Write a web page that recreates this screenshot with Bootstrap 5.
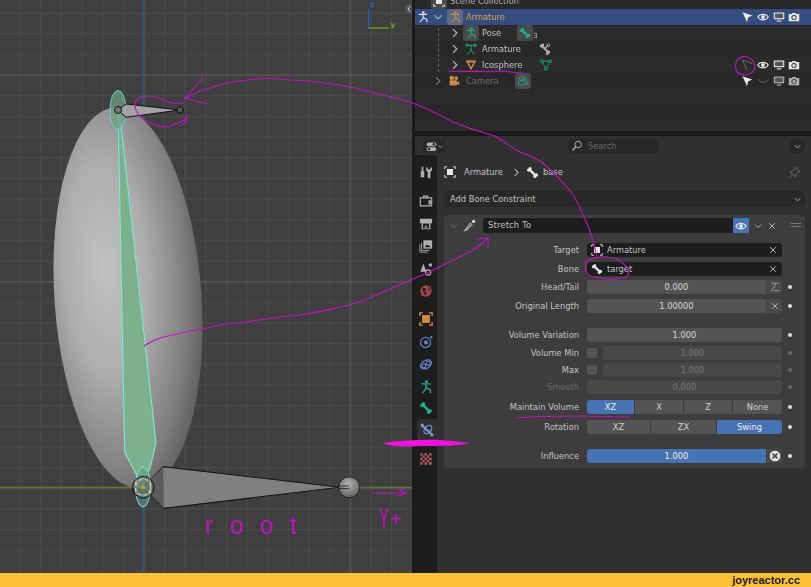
<!DOCTYPE html>
<html lang="en">
<head>
<meta charset="utf-8">
<title>Blender Stretch To constraint</title>
<link href="https://cdn.jsdelivr.net/npm/bootstrap@5.3.0/dist/css/bootstrap.min.css" rel="stylesheet">
<style>
html,body{margin:0;padding:0;width:811px;height:587px;overflow:hidden;background:#1a1a1a;}
body{font-family:"DejaVu Sans","Liberation Sans",sans-serif;font-size:8.3px;line-height:14px;color:#c4c4c4;}
.root-box{width:811px;height:587px;}
.stage{height:573px;}
.vp{width:412px;height:573px;flex:none;display:block;}
.rcol{width:396px;margin-left:3px;flex:none;filter:blur(.3px);}
.outl{height:131px;background:#282828;overflow:hidden;margin-bottom:5px;flex:none;}
.orow{height:16px;flex:none;}
.orow.alt{background:#2b2b2b;}
.orow.first{margin-top:-7px;}
.orow.sel{background:#334d80;}
.oi{width:12px;height:12px;flex:none;display:block;}
.boxi{width:16px;height:16px;flex:none;background:#4a4a4a;border-radius:3px;margin-right:3px;display:flex;align-items:center;justify-content:center;}
.boxi.or{background:#5f6b86;}
.boxi.nb{background:transparent;}
.otxt{white-space:nowrap;}
.orange{color:#e5a038;}
.green{color:#1fb08c;}
.ocolor{color:#d08a45;}
.dimt{color:#6f6f6f;}
.gry{color:#b0b0b0;}
.wht{color:#e8e8e8;}
.t-w{color:#a04848;}
.t-b{color:#5f80c4;}
.t-a{color:#7a9ae0;}
.t-r{color:#a85a66;}
.s2{width:2px;flex:none;}.s3{width:3px;flex:none;}.s4{width:4px;flex:none;}.s6{width:6px;flex:none;}
.s14{width:14px;flex:none;}.s16{width:16px;flex:none;}.s17{width:17px;flex:none;}.s18{width:18px;flex:none;}.s34{width:34px;flex:none;}
.restr{padding-right:9px;}
.restr span{width:15.67px;display:flex;justify-content:center;}
.numsub{font-size:7px;line-height:7px;align-self:flex-end;margin-left:-3px;margin-bottom:1px;}
.dash{position:absolute;left:23px;top:28px;height:44px;width:0;border-left:1px dashed #666;}
.props{background:#303030;}
.phead{height:19px;flex:none;padding:3px 6px 0 8px;background:#303030;}
.pbtn{background:#282828;border-radius:3px;height:14px;display:flex;align-items:center;justify-content:center;}
.b-ed{width:23px;}
.b-se{width:90px;margin-left:122px;color:#666;justify-content:flex-start;padding-left:3px;gap:5px;}
.b-ch{width:15px;margin-left:auto;}
.tabs{width:22px;background:#1d1d1d;flex:none;padding-top:6px;}
.tb{height:21px;display:flex;align-items:center;justify-content:center;flex:none;}
.tb svg{width:14px;height:14px;display:block;}
.tb.act{background:#303030;border-radius:3px 0 0 3px;margin-left:2px;}
.g0{margin-top:0;}.g1{margin-top:1px;}.g2{margin-top:2px;}.g7{margin-top:7px;}.g8{margin-top:8px;}
.m3{margin-top:3px;}.m4{margin-top:4px;}.m5{margin-top:5px;}.m6{margin-top:6px;}.m10{margin-top:10px;}.m15{margin-top:15px;}
.pmain{padding:0 6px 0 7px;min-width:0;}
.crumb{height:36px;padding-bottom:2px;flex:none;}
.crumb svg{display:block;}
.addc{height:16px;background:#282828;border-radius:3px;padding:0 3px 0 6px;color:#c4c4c4;flex:none;}
.panel{background:#3d3d3d;border-radius:4px;margin-top:8px;padding:3px 0 6px;height:253px;flex:none;}
.hdr{height:15px;padding-left:5px;}
.namef{width:250px;background:#1d1d1d;border-radius:3px 0 0 3px;height:15px;padding-left:5px;line-height:15px;margin-left:7px;letter-spacing:.2px;}
.eyeb{width:16px;height:15px;background:#4772b3;display:flex;align-items:center;justify-content:center;}
.frow{height:14px;}
.lbl{width:135px;text-align:right;flex:none;white-space:nowrap;}
.lbl.off{color:#6b6b6b;}
.fbox{width:195px;margin-left:8px;flex:none;display:flex;gap:1px;height:14px;}
.txtf{background:#1d1d1d;border-radius:3px;flex:1;display:flex;align-items:center;padding:0 4px;color:#c4c4c4;}
.numf{background:#545454;border-radius:3px;flex:1;text-align:center;color:#d8d8d8;line-height:14px;}
.numf.l{border-radius:3px 0 0 3px;}
.sqb{width:15px;background:#4a4a4a;border-radius:0 3px 3px 0;display:flex;align-items:center;justify-content:center;flex:none;}
.off-f{background:#484848;color:#787878;}
.chk{width:10px;height:10px;background:#545454;border-radius:2px;margin:2px 5px 0 0;flex:none;}
.seg{background:#545454;text-align:center;line-height:14px;color:#cfcfcf;flex:none;}
.seg.on{background:#4772b3;color:#f0f0f0;}
.seg:first-child{border-radius:3px 0 0 3px;}
.seg:last-child{border-radius:0 3px 3px 0;}
.w47{width:47px;}.w48{width:48px;}.w49{width:49px;}.w63{width:63px;}.w65{width:65px;}
.dotc{width:4px;height:4px;border-radius:50%;background:#e0e0e0;margin-left:6px;flex:none;align-self:center;}
.dotc.off{background:#6a6a6a;}
.inflb{background:#4772b3;color:#eee;}
.footbar{height:14px;background:#fdc131;color:#1a1a1a;font-family:"Liberation Sans",sans-serif;font-weight:700;font-size:11px;line-height:14px;padding-right:11px;text-align:right;flex:none;}
.annot{position:absolute;left:0;top:0;width:811px;height:587px;pointer-events:none;}
</style>
</head>
<body>
<svg class="d-none" width="0" height="0" aria-hidden="true">
<defs>
<symbol id="i-bone" viewBox="0 0 16 16"><path d="M4.500 4.500 11.500 11.500" stroke="currentColor" stroke-width="3" fill="none"/><circle cx="3.200" cy="5" r="2" fill="currentColor"/><circle cx="5" cy="3.200" r="2" fill="currentColor"/><circle cx="11" cy="12.800" r="2" fill="currentColor"/><circle cx="12.800" cy="11" r="2" fill="currentColor"/></symbol>
<symbol id="i-fig" viewBox="0 0 16 16"><g stroke="currentColor" stroke-width="1.500" fill="none"><path d="M2.500 4.500H13.500M7.500 4.500 8.500 9 4 15M8.500 9 13 11 13 15"/></g><circle cx="8.500" cy="2" r="1.700" fill="currentColor"/></symbol>
<symbol id="i-arm" viewBox="0 0 16 16"><g stroke="currentColor" stroke-width="1.300" fill="none"><path d="M3 3 13 3M8 3 8 9 3.500 15M8 9 12.500 15"/><circle cx="2.500" cy="3" r="1.600"/><circle cx="13.500" cy="3" r="1.600"/></g></symbol>
<symbol id="i-eye" viewBox="0 0 16 16"><path d="M1 8C4 3 12 3 15 8 12 13 4 13 1 8Z" fill="none" stroke="currentColor" stroke-width="1.500"/><circle cx="8" cy="8" r="2.600" fill="currentColor"/></symbol>
<symbol id="i-mon" viewBox="0 0 16 16"><rect x="1" y="2" width="14" height="9" rx="1" fill="currentColor"/><rect x="2.500" y="3.500" width="11" height="6" fill="#555"/><path d="M5 14H11V12.500H5Z" fill="currentColor"/></symbol>
<symbol id="i-cam" viewBox="0 0 16 16"><path d="M1 4H5L6 2.500H10L11 4H15V13.500H1Z" fill="currentColor"/><circle cx="8" cy="8.500" r="3.600" fill="#555"/><circle cx="8" cy="8.500" r="2" fill="currentColor"/></symbol>
<symbol id="i-cur" viewBox="0 0 16 16"><path d="M2 1.500 15 6 9.500 8.500 8 15Z" fill="currentColor"/></symbol>
<symbol id="i-curo" viewBox="0 0 16 16"><path d="M2 1.500 15 6M2 1.500 8 15" fill="none" stroke="currentColor" stroke-width="1.200"/></symbol>
<symbol id="i-eyec" viewBox="0 0 16 16"><path d="M1.500 6C4 11 12 11 14.500 6" fill="none" stroke="currentColor" stroke-width="1.200"/></symbol>
<symbol id="i-chd" viewBox="0 0 16 16"><path d="M3 5.500 8 10.500 13 5.500" fill="none" stroke="currentColor" stroke-width="1.600"/></symbol>
<symbol id="i-chr" viewBox="0 0 16 16"><path d="M5.500 3 10.500 8 5.500 13" fill="none" stroke="currentColor" stroke-width="1.600"/></symbol>
<symbol id="i-x" viewBox="0 0 16 16"><path d="M3.500 3.500 12.500 12.500M12.500 3.500 3.500 12.500" fill="none" stroke="currentColor" stroke-width="1.600"/></symbol>
<symbol id="i-tri" viewBox="0 0 16 16"><path d="M1 2H15L8 15Z M4.500 4.500 8 10.800 11.500 4.500Z" fill="currentColor" fill-rule="evenodd"/></symbol>
<symbol id="i-trio" viewBox="0 0 16 16"><path d="M2.500 3H13.500L8 13.500Z" fill="none" stroke="currentColor" stroke-width="1.100"/><g fill="#282828" stroke="currentColor"><rect x="1" y="1.500" width="3" height="3"/><rect x="12" y="1.500" width="3" height="3"/><rect x="6.500" y="12" width="3" height="3"/></g></symbol>
<symbol id="i-frame" viewBox="0 0 16 16"><path d="M1 4V1H4M12 1H15V4M15 12V15H12M4 15H1V12" fill="none" stroke="currentColor" stroke-width="1.200"/><rect x="4" y="4" width="8" height="8" fill="currentColor"/></symbol>
<symbol id="i-camobj" viewBox="0 0 16 16"><circle cx="5" cy="4" r="3" fill="currentColor"/><circle cx="11" cy="4" r="2.500" fill="currentColor"/><rect x="2" y="7" width="10" height="7" rx="1" fill="currentColor"/><path d="M12 10 15 8V14L12 12Z" fill="currentColor"/></symbol>
<symbol id="i-tool" viewBox="0 0 16 16"><g fill="currentColor"><path d="M3 2H5V7H6V14H2V7H3Z"/><path d="M9 2 10.500 5H12.500L14 2 15 4C15 6 14 7.500 13 8V15H10V8C9 7.500 8 6 8 4Z"/></g></symbol>
<symbol id="i-rend" viewBox="0 0 16 16"><path d="M1.500 4.500H14.500V13.500H1.500ZM5 4.500V2.500H10V4.500" fill="none" stroke="currentColor" stroke-width="1.300"/><rect x="11" y="7" width="2.500" height="5" fill="currentColor"/></symbol>
<symbol id="i-print" viewBox="0 0 16 16"><path d="M1 2H15V7H13V14H3V7H1Z" fill="currentColor"/><rect x="4.500" y="7.500" width="7" height="5.500" fill="#1d1d1d"/><path d="M6 12 8 9.500 10 12Z" fill="currentColor"/></symbol>
<symbol id="i-layer" viewBox="0 0 16 16"><path d="M5 1.500H15V11H5Z" fill="currentColor"/><path d="M6.500 9.500 9 6 11 8 12 7 13.500 9.500Z" fill="#1d1d1d"/><path d="M3 4V13H12M1 6V15H10" fill="none" stroke="currentColor" stroke-width="1"/></symbol>
<symbol id="i-scene" viewBox="0 0 16 16"><path d="M5 2 8.500 11H1.500Z" fill="currentColor"/><circle cx="13" cy="3.500" r="2" fill="currentColor"/><circle cx="10.500" cy="12" r="3" fill="none" stroke="currentColor" stroke-width="1.200"/></symbol>
<symbol id="i-world" viewBox="0 0 16 16"><circle cx="8" cy="8" r="6.500" fill="currentColor"/><path d="M4 4 8 5 7 8 9 10 7 13 5 9ZM10 3 13 6 11 8Z" fill="#1d1d1d"/><path d="M2 14 14 2" stroke="currentColor" stroke-width="1"/></symbol>
<symbol id="i-obj" viewBox="0 0 16 16"><path d="M1 4.500V1H4.500M11.500 1H15V4.500M15 11.500V15H11.500M4.500 15H1V11.500" fill="none" stroke="currentColor" stroke-width="1.600"/><rect x="3.500" y="3.500" width="9" height="9" fill="currentColor"/></symbol>
<symbol id="i-phys" viewBox="0 0 16 16"><circle cx="7.500" cy="8.500" r="5.800" fill="none" stroke="currentColor" stroke-width="1.400"/><circle cx="8" cy="8.500" r="2.400" fill="currentColor"/><circle cx="14" cy="2.500" r="1.400" fill="currentColor"/></symbol>
<symbol id="i-con" viewBox="0 0 16 16"><g fill="none" stroke="currentColor" stroke-width="1.400"><ellipse cx="8" cy="8.500" rx="6.800" ry="4.500" transform="rotate(-30 8 8.500)"/><circle cx="5.500" cy="10" r="2.200"/><circle cx="10.500" cy="7" r="2.200"/></g></symbol>
<symbol id="i-bcon" viewBox="0 0 16 16"><g fill="none" stroke="currentColor" stroke-width="1.400"><path d="M2 2.500 14 13.500" stroke-width="2.200"/><ellipse cx="9" cy="7.500" rx="5.500" ry="3.500" transform="rotate(-50 9 7.500)"/></g><circle cx="2.500" cy="2.500" r="1.800" fill="currentColor"/><circle cx="13.500" cy="13.500" r="1.800" fill="currentColor"/></symbol>
<symbol id="i-tex" viewBox="0 0 16 16"><rect x="1.500" y="1.500" width="13" height="13" fill="#3a2226"/><g fill="currentColor"><path d="M1.500 1.500H4V4H1.500ZM6.500 1.500H9V4H6.500ZM11.500 1.500H14.500V4H11.500ZM4 4H6.500V6.500H4ZM9 4H11.500V6.500H9ZM1.500 6.500H4V9H1.500ZM6.500 6.500H9V9H6.500ZM11.500 6.500H14.500V9H11.500ZM4 9H6.500V11.500H4ZM9 9H11.500V11.500H9ZM1.500 11.500H4V14.500H1.500ZM6.500 11.500H9V14.500H6.500ZM11.500 11.500H14.500V14.500H11.500Z"/></g></symbol>
<symbol id="i-brush" viewBox="0 0 16 16"><path d="M3 13 2 14.500 4 14 11 7 9 5Z" fill="none" stroke="currentColor" stroke-width="1.300"/><circle cx="13" cy="3" r="2" fill="#ddd"/></symbol>
<symbol id="i-pin" viewBox="0 0 16 16"><path d="M9 1.500 14.500 7 12.500 7.500 9.500 11 9 13.500 2.500 7 5 6.500 8.500 3.500ZM5 11 1.500 14.500" fill="none" stroke="currentColor" stroke-width="1.100"/></symbol>
<symbol id="i-edit" viewBox="0 0 16 16"><rect x="1" y="2" width="14" height="5.500" rx="2.700" fill="currentColor"/><rect x="1" y="9" width="14" height="5.500" rx="2.700" fill="currentColor"/><circle cx="11.500" cy="4.700" r="1.800" fill="#282828"/><circle cx="4.500" cy="11.700" r="1.800" fill="#282828"/></symbol>
<symbol id="i-search" viewBox="0 0 16 16"><circle cx="9.500" cy="6" r="4.300" fill="none" stroke="currentColor" stroke-width="1.300"/><path d="M6.500 9 2 14" stroke="currentColor" stroke-width="1.800"/></symbol>
<symbol id="i-ht" viewBox="0 0 16 16"><path d="M3 3H13M3 14 9 4M6 13H14" fill="none" stroke="currentColor" stroke-width="1.100"/></symbol>
<symbol id="i-xc" viewBox="0 0 16 16"><circle cx="8" cy="8" r="7" fill="currentColor"/><path d="M4.800 4.800 11.200 11.200M11.200 4.800 4.800 11.200" stroke="#444" stroke-width="2"/></symbol>
<symbol id="i-cam2" viewBox="0 0 16 16"><circle cx="5.500" cy="4.500" r="2.500" fill="none" stroke="currentColor"/><circle cx="10.500" cy="4.500" r="2" fill="none" stroke="currentColor"/><rect x="2" y="7.500" width="9" height="6" rx="1" fill="none" stroke="currentColor"/><path d="M11 10 14.500 8V13L11 11.500" fill="none" stroke="currentColor"/></symbol>
<symbol id="i-bones" viewBox="0 0 16 16"><g stroke="currentColor" stroke-width="2.500" fill="none"><path d="M3 3 13 13"/></g><g fill="currentColor"><circle cx="3" cy="4" r="2"/><circle cx="5" cy="2.500" r="2"/><circle cx="13" cy="12" r="2"/><circle cx="11" cy="14" r="2"/></g><path d="M12 3 8 7" stroke="currentColor" stroke-width="1.500"/><circle cx="12.500" cy="3" r="2" fill="none" stroke="currentColor"/></symbol>
</defs>
</svg>

<div class="root-box position-relative d-flex flex-column">
  <div class="stage d-flex">
    <svg class="vp" viewBox="0 0 412 573" role="img" aria-label="3D viewport">
      <defs>
        <radialGradient id="eggg" cx=".36" cy=".42" r=".8"><stop offset="0" stop-color="#c2c2c2"/><stop offset=".35" stop-color="#adadad"/><stop offset=".68" stop-color="#7e7e7e"/><stop offset=".9" stop-color="#525252"/><stop offset="1" stop-color="#454242"/></radialGradient>
        <radialGradient id="ballg" cx=".45" cy=".35" r=".7"><stop offset="0" stop-color="#b0b0b0"/><stop offset="1" stop-color="#5c5c5c"/></radialGradient>
        <pattern id="gridp" x="143.3" y="74.5" width="20.64" height="20.66" patternUnits="userSpaceOnUse"><path d="M0.6 0V20.66M0 0.6H20.64" stroke="#4a4a4a" stroke-width="1.2" fill="none"/></pattern>
        <pattern id="gridm" x="143.3" y="74.5" width="206.4" height="206.6" patternUnits="userSpaceOnUse"><path d="M0.6 0V206.6M0 0.6H206.4" stroke="#575757" stroke-width="1.2" fill="none"/></pattern>
      </defs>
      <rect width="412" height="573" fill="#3f3f3f"/>
      <rect width="412" height="573" fill="url(#gridp)"/>
      <rect width="412" height="573" fill="url(#gridm)"/>
      <path d="M143.3 0V573" stroke="#2c5a8c" stroke-width="1.2"/>
      <path d="M0 487.3H412" stroke="#5d7a2e" stroke-width="1.2"/>
      <ellipse cx="128" cy="298" rx="73.500" ry="191" transform="rotate(-4 128 298)" fill="url(#eggg)"/>
      <polygon points="118,111 119.5,111 156,443 150,468 143,480 136.5,475 124.7,452" fill="#7fb08e" stroke="#7fe6dc" stroke-width="1.1"/>
      <ellipse cx="118" cy="110" rx="8" ry="19.5" fill="#6f9f80" fill-opacity=".75" stroke="#68cfc8" stroke-width="1"/>
      <polygon points="118,110 126,104 180,110 126,117.3" fill="#a3a3a3" stroke="#111" stroke-width="1"/>
      <circle cx="118" cy="110" r="3.5" fill="#777" stroke="#111"/>
      <circle cx="180" cy="110" r="3.2" fill="#555" stroke="#111"/>
      <polygon points="143.3,487.3 163.3,466.7 340,487.3 164,508.3" fill="#808080" stroke="#151515" stroke-width="1.1"/>
      <polygon points="143.3,487.3 163.3,466.7 164,508.3" fill="#5c5c5c"/>
      <circle cx="349.3" cy="487.3" r="10.5" fill="url(#ballg)" stroke="#222" stroke-width="1"/>
      <path d="M338 486H349M338 488.5H349" stroke="#222" stroke-width=".8"/>
      <ellipse cx="143" cy="487" rx="7.5" ry="20" fill="#5f9a85" fill-opacity=".6" stroke="#7fe6dc" stroke-width="1"/>
      <circle cx="143.3" cy="487.3" r="10.8" fill="none" stroke="#111" stroke-width="1"/>
      <circle cx="143.3" cy="487.3" r="8" fill="none" stroke="#e8e8e8" stroke-width="1.1"/>
      <circle cx="143.3" cy="487.3" r="8" fill="none" stroke="#d85040" stroke-width="1.1" stroke-dasharray="3 3"/>
      <circle cx="143.3" cy="487.3" r="2" fill="#f08a10"/>
      <path d="M368.5 28V9" stroke="#2462c8" stroke-width="1.3"/>
      <path d="M368.5 28H389" stroke="#6ba810" stroke-width="1.3"/>
      <text x="370.5" y="7" font-family="DejaVu Sans" font-size="7" font-weight="700" fill="#2462c8">z</text>
      <text x="390.5" y="27" font-family="DejaVu Sans" font-size="7" font-weight="700" fill="#6ba810">y</text>
      <circle cx="410" cy="9" r="5" fill="#555"/>
      <path d="M410.5 6.5 408 9 410.5 11.5" stroke="#ccc" fill="none"/>
    </svg>

    <div class="rcol d-flex flex-column">
      <div class="outl position-relative">
        <div class="d-flex flex-column">
          <div class="orow first d-flex align-items-center">
            <span class="s16"></span><span class="boxi"><svg class="oi wht"><use href="#i-frame"/></svg></span><span class="otxt gry">Scene Collection</span>
          </div>
          <div class="orow sel d-flex align-items-center">
            <span class="s2"></span><svg class="oi wht"><use href="#i-fig"/></svg>
            <span class="s3"></span><svg class="oi gry"><use href="#i-chd"/></svg>
            <span class="s3"></span><span class="boxi or"><svg class="oi ocolor"><use href="#i-fig"/></svg></span>
            <span class="otxt orange">Armature</span>
            <div class="restr ms-auto d-flex align-items-center">
              <span><svg class="oi wht"><use href="#i-cur"/></svg></span><span><svg class="oi wht"><use href="#i-eye"/></svg></span><span><svg class="oi wht"><use href="#i-mon"/></svg></span><span><svg class="oi wht"><use href="#i-cam"/></svg></span>
            </div>
          </div>
          <div class="orow alt d-flex align-items-center">
            <span class="s34"></span><svg class="oi gry"><use href="#i-chr"/></svg><span class="s2"></span>
            <span class="boxi"><svg class="oi green"><use href="#i-fig"/></svg></span>
            <span class="otxt">Pose</span><span class="s16"></span>
            <span class="boxi"><svg class="oi green"><use href="#i-bone"/></svg></span><span class="numsub">3</span>
          </div>
          <div class="orow d-flex align-items-center">
            <span class="s34"></span><svg class="oi gry"><use href="#i-chr"/></svg><span class="s2"></span>
            <span class="boxi nb"><svg class="oi green"><use href="#i-arm"/></svg></span>
            <span class="otxt">Armature</span><span class="s18"></span><svg class="oi gry"><use href="#i-bones"/></svg>
          </div>
          <div class="orow alt d-flex align-items-center">
            <span class="s34"></span><svg class="oi gry"><use href="#i-chr"/></svg><span class="s2"></span>
            <span class="boxi nb"><svg class="oi ocolor"><use href="#i-tri"/></svg></span>
            <span class="otxt">Icosphere</span><span class="s18"></span><svg class="oi green"><use href="#i-trio"/></svg>
            <div class="restr ms-auto d-flex align-items-center">
              <span><svg class="oi dimt"><use href="#i-curo"/></svg></span><span><svg class="oi wht"><use href="#i-eye"/></svg></span><span><svg class="oi wht"><use href="#i-mon"/></svg></span><span><svg class="oi wht"><use href="#i-cam"/></svg></span>
            </div>
          </div>
          <div class="orow d-flex align-items-center">
            <span class="s17"></span><svg class="oi dimt"><use href="#i-chr"/></svg><span class="s4"></span>
            <svg class="oi ocolor"><use href="#i-camobj"/></svg><span class="s6"></span>
            <span class="otxt dimt">Camera</span><span class="s16"></span>
            <span class="boxi"><svg class="oi green"><use href="#i-cam2"/></svg></span>
            <div class="restr ms-auto d-flex align-items-center">
              <span><svg class="oi wht"><use href="#i-cur"/></svg></span><span><svg class="oi dimt"><use href="#i-eyec"/></svg></span><span><svg class="oi gry"><use href="#i-mon"/></svg></span><span><svg class="oi gry"><use href="#i-cam"/></svg></span>
            </div>
          </div>
          <div class="orow alt"></div><div class="orow"></div><div class="orow alt"></div>
        </div>
        <span class="dash"></span>
      </div>

      <div class="props d-flex flex-column flex-grow-1">
        <div class="phead d-flex">
          <div class="pbtn b-ed gry"><svg width="11" height="11"><use href="#i-edit"/></svg><svg width="7" height="7"><use href="#i-chd"/></svg></div>
          <div class="pbtn b-se"><svg class="gry" width="12" height="12"><use href="#i-search"/></svg><span>Search</span></div>
          <div class="pbtn b-ch gry"><svg width="9" height="9"><use href="#i-chd"/></svg></div>
        </div>
        <div class="d-flex flex-grow-1">
          <div class="tabs d-flex flex-column">
            <div class="tb gry"><svg><use href="#i-tool"/></svg></div>
            <div class="tb g8 gry"><svg><use href="#i-rend"/></svg></div>
            <div class="tb g2 gry"><svg><use href="#i-print"/></svg></div>
            <div class="tb g1 gry"><svg><use href="#i-layer"/></svg></div>
            <div class="tb g2 gry"><svg><use href="#i-scene"/></svg></div>
            <div class="tb g1 t-w"><svg><use href="#i-world"/></svg></div>
            <div class="tb g7 ocolor"><svg><use href="#i-obj"/></svg></div>
            <div class="tb g2 t-b"><svg><use href="#i-phys"/></svg></div>
            <div class="tb g1 t-b"><svg><use href="#i-con"/></svg></div>
            <div class="tb g2 green"><svg><use href="#i-fig"/></svg></div>
            <div class="tb g0 green"><svg><use href="#i-bone"/></svg></div>
            <div class="tb act g1 t-a"><svg><use href="#i-bcon"/></svg></div>
            <div class="tb g8 t-r"><svg><use href="#i-tex"/></svg></div>
          </div>
          <div class="pmain flex-grow-1 d-flex flex-column">
            <div class="crumb d-flex align-items-center">
              <svg class="wht" width="12" height="12"><use href="#i-frame"/></svg>
              <span class="ms-2">Armature</span>
              <svg class="gry ms-2" width="11" height="11"><use href="#i-chr"/></svg>
              <svg class="wht ms-1" width="13" height="13"><use href="#i-bone"/></svg>
              <span class="ms-1">base</span>
              <svg class="dimt ms-auto me-1" width="13" height="13"><use href="#i-pin"/></svg>
            </div>
            <div class="addc d-flex align-items-center justify-content-between"><span>Add Bone Constraint</span><svg class="gry" width="9" height="9"><use href="#i-chd"/></svg></div>
            <div class="panel d-flex flex-column">
              <div class="hdr d-flex align-items-center">
                <svg class="dimt" width="10" height="10"><use href="#i-chd"/></svg>
                <svg class="gry ms-1" width="13" height="13"><use href="#i-brush"/></svg>
                <div class="namef">Stretch To</div>
                <div class="eyeb wht"><svg width="12" height="12"><use href="#i-eye"/></svg></div>
                <svg class="gry ms-1" width="10" height="10"><use href="#i-chd"/></svg>
                <svg class="gry ms-1" width="10" height="10"><use href="#i-x"/></svg>
                <span class="s14"></span>
                <svg width="10" height="6"><g fill="#777"><rect y="0" width="10" height="1"/><rect y="3" width="10" height="1"/></g></svg>
              </div>
              <div class="frow m10 d-flex"><div class="lbl">Target</div><div class="fbox"><div class="txtf"><svg class="wht me-1" width="12" height="12"><use href="#i-frame"/></svg><span>Armature</span><svg class="gry ms-auto" width="10" height="10"><use href="#i-x"/></svg></div></div></div>
              <div class="frow m5 d-flex"><div class="lbl">Bone</div><div class="fbox"><div class="txtf"><svg class="wht me-1" width="12" height="12"><use href="#i-bone"/></svg><span>target</span><svg class="gry ms-auto" width="10" height="10"><use href="#i-x"/></svg></div></div></div>
              <div class="frow m4 d-flex"><div class="lbl">Head/Tail</div><div class="fbox"><div class="numf l">0.000</div><div class="sqb gry"><svg width="12" height="12"><use href="#i-ht"/></svg></div></div><span class="dotc"></span></div>
              <div class="frow m5 d-flex"><div class="lbl">Original Length</div><div class="fbox"><div class="numf l">1.00000</div><div class="sqb gry"><svg width="10" height="10"><use href="#i-x"/></svg></div></div><span class="dotc"></span></div>
              <div class="frow m15 d-flex"><div class="lbl">Volume Variation</div><div class="fbox"><div class="numf">1.000</div></div><span class="dotc"></span></div>
              <div class="frow m4 d-flex"><div class="lbl">Volume Min</div><div class="fbox"><span class="chk"></span><div class="numf off-f">1.000</div></div><span class="dotc off"></span></div>
              <div class="frow m3 d-flex"><div class="lbl">Max</div><div class="fbox"><span class="chk"></span><div class="numf off-f">1.000</div></div><span class="dotc off"></span></div>
              <div class="frow m3 d-flex"><div class="lbl off">Smooth</div><div class="fbox"><div class="numf off-f">0.000</div></div><span class="dotc off"></span></div>
              <div class="frow m6 d-flex"><div class="lbl">Maintain Volume</div><div class="fbox"><div class="seg on w47">XZ</div><div class="seg w48">X</div><div class="seg w48">Z</div><div class="seg w49">None</div></div><span class="dotc"></span></div>
              <div class="frow m6 d-flex"><div class="lbl">Rotation</div><div class="fbox"><div class="seg w63">XZ</div><div class="seg w65">ZX</div><div class="seg on w65">Swing</div></div><span class="dotc"></span></div>
              <div class="frow m15 d-flex"><div class="lbl">Influence</div><div class="fbox"><div class="numf l inflb">1.000</div><div class="sqb wht"><svg width="12" height="12"><use href="#i-xc"/></svg></div></div><span class="dotc"></span></div>
            </div>
          </div>
        </div>
      </div>
    </div>
  </div>
  <div class="footbar">joyreactor.cc</div>

  <svg class="annot" viewBox="0 0 811 587" aria-label="annotations">
    <g fill="none" stroke="#c412c4" stroke-width="1.1" stroke-linecap="round" stroke-linejoin="round">
      <path d="M185 98C205 88 225 82 247 80C262 78 277 78 290 80C320 81 335 84 350 87C372 92 392 97 410 102C425 107 440 115 453 122C470 129 485 133 495 136C505 142 512 148 520 152C528 155 536 158 543 163C552 171 560 179 567 187C574 195 579 205 583 215C589 227 594 240 597 258"/>
      <path d="M203 78 185 98 207 104"/>
      <path d="M183 103C176 104 172 103 167 102C160 98 155 96 150 96C143 96 135 98 135 105C135 112 141 119 150 123C157 126 162 127 167 127C173 126 176 123 180 122C185 120 187 118 187 115C187 120 184 124 180 126"/>
      <path d="M144 346C150 342 155 340 160 338C175 334 190 331 207 328C218 325 230 323 240 323C262 319 280 317 300 315C320 312 335 308 350 305C372 298 392 288 410 280C425 275 435 269 443 265C453 260 463 255 473 250C479 246 484 242 488 238"/>
      <path d="M477 239 488 238 488 248"/>
      <path d="M585 262C592 258 600 256 608 257C615 257 622 262 627 267C630 272 629 277 623 278C612 280 600 279 590 276C585 272 584 267 587 262"/>
      <path d="M747 57C751 58 754 61 755 66C755 71 751 74 747 75C741 75 737 74 736 70C735 65 736 60 740 58C743 56 745 56 747 57Z"/>
      <path d="M449 71C470 72 490 71 505 71C512 72 518 73 523 73"/>
      <path d="M517 418C540 416 560 416 580 416C600 416 615 417 630 417"/>
      <path d="M372 493H407M398 489 407 493 398 496"/>
    </g>
    <path d="M382 443C400 441 418 439 440 440C452 441 462 442 470 443C460 446 440 446 420 446C405 447 392 447 382 443Z" fill="#f010e0"/>
    <text x="205" y="534" font-family="Liberation Sans" font-size="25" fill="#c412c4" textLength="92" lengthAdjust="spacing">root</text>
    <text x="379" y="528" font-family="Liberation Sans" font-size="30" fill="#c412c4" textLength="10" lengthAdjust="spacingAndGlyphs">Y</text>
    <text x="390" y="526" font-family="Liberation Sans" font-size="20" fill="#c412c4" textLength="12" lengthAdjust="spacingAndGlyphs">+</text>
  </svg>
</div>
<script src="https://cdn.jsdelivr.net/npm/bootstrap@5.3.0/dist/js/bootstrap.bundle.min.js"></script>
</body>
</html>
